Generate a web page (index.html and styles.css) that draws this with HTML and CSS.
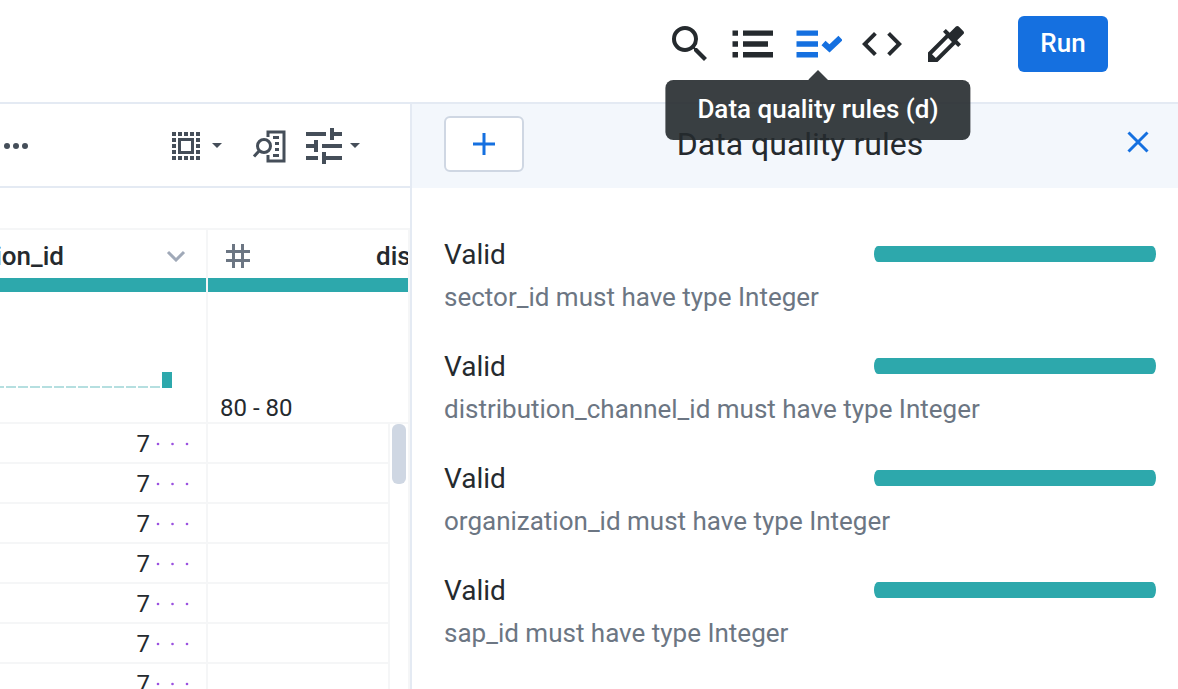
FILE: index.html
```html
<!DOCTYPE html>
<html lang="en">
<head>
<meta charset="utf-8">
<title>Data quality rules</title>
<link rel="stylesheet" href="styles.css">
</head>
<body>
<div class="app">
  <header class="topbar">
    <nav class="tools">
      <button class="icon-button" aria-label="Search"><svg viewBox="0 0 24 24"><path d="M15.5 14h-.79l-.28-.27A6.47 6.47 0 0 0 16 9.5 6.5 6.5 0 1 0 9.5 16c1.61 0 3.09-.59 4.23-1.57l.27.28v.79l5 4.99L20.49 19l-4.99-5zm-6 0C7.01 14 5 11.99 5 9.5S7.01 5 9.5 5 14 7.01 14 9.5 11.99 14 9.5 14z"/></svg></button>
      <button class="icon-button" aria-label="Recipe"><svg viewBox="0 0 48 48"><path d="M2.5 10.4H8v5.4H2.5zM2.5 21.2H8v5.6H2.5zM2.5 31.9H8v5.6H2.5zM13 10.4h30v5.4H13zM13 21.2h25v5.6H13zM13 31.9h30v5.6H13z"/></svg></button>
      <div class="tooltip-anchor">
        <button class="icon-button active" aria-label="Data quality rules"><svg viewBox="0 0 48 48"><path d="M2.5 10.4H24v5.4H2.5zM2.5 21.2H24v5.6H2.5zM2.5 31.9H24v5.6H2.5z"/><path class="check" d="M29.5 23l6 5.500 11-10.500"/></svg></button>
        <div class="tooltip" role="tooltip">Data quality rules (d)</div>
      </div>
      <button class="icon-button" aria-label="Code"><svg viewBox="0 0 24 24"><path d="M9.400 16.600L4.800 12l4.600-4.600L8 6l-6 6 6 6zM14.600 16.600l4.600-4.600-4.600-4.600L16 6l6 6-6 6z"/></svg></button>
      <button class="icon-button" aria-label="Color picker"><svg viewBox="0 0 24 24"><path d="M20.710 5.630l-2.340-2.340c-.39-.39-1.020-.39-1.410 0l-3.120 3.120-1.930-1.910-1.410 1.410 1.420 1.420L3 16.250V21h4.750l8.920-8.920 1.420 1.420 1.410-1.410-1.920-1.920 3.120-3.120c.4-.4.4-1.030.01-1.420zM6.920 19L5 17.080l8.060-8.060 1.920 1.920L6.920 19z"/></svg></button>
    </nav>
    <button class="run">Run</button>
  </header>

  <main class="workspace">
    <section class="data">
      <div class="toolbar">
        <button class="tool more" aria-label="More"><svg width="28" height="8" viewBox="0 0 28 8"><circle cx="5" cy="4" r="3"/><circle cx="14" cy="4" r="3"/><circle cx="23" cy="4" r="3"/></svg></button>
        <button class="tool select" aria-label="Select">
          <svg width="28" height="28" viewBox="0 0 28 28"><path class="dots" d="M0 2h28M0 26h28M0 8h28M0 14h28M0 20h28"/><path class="blank" d="M4 4h20v20H4z"/><path class="frame" d="M7.500 7.500h13v13h-13z"/></svg>
          <svg width="10" height="6" viewBox="0 0 10 6"><path d="M0 0h10L5 5z"/></svg>
        </button>
        <button class="tool" aria-label="Find column"><svg width="34" height="34" viewBox="0 0 34 34"><path class="line" d="M16 8V3h16v29H16v-6"/><path class="line" d="M21 8.500h6M23 14.500h4M23 20.500h4M21 26.500h6"/><circle class="line" cx="12" cy="17" r="6.500"/><path class="line" d="M7.500 21.500L2 27.500"/></svg></button>
        <button class="tool filter" aria-label="Filter">
          <svg width="36" height="36" viewBox="3 3 18 18"><path d="M3 17v2h6v-2H3zM3 5v2h10V5H3zm10 16v-2h8v-2h-8v-2h-2v6h2zM7 9v2H3v2h4v2h2V9H7zm14 4v-2H11v2h10zm-6-4h2V7h4V5h-4V3h-2v6z"/></svg>
          <svg width="10" height="6" viewBox="0 0 10 6"><path d="M0 0h10L5 5z"/></svg>
        </button>
      </div>

      <div class="grid">
        <table class="table">
          <colgroup><col><col class="col-next"><col class="col-scroll"></colgroup>
          <thead>
            <tr>
              <th>
                <div class="column-head first"><span>organization_id</span><svg class="chevron" width="20" height="12" viewBox="0 0 20 12"><path d="M2 2l8 8 8-8"/></svg></div>
                <div class="quality"></div>
                <div class="profile bars"><svg width="178" height="16" viewBox="0 0 178 16"><path class="low" d="M0 15H10M12 15H22M24 15H34M36 15H46M48 15H58M60 15H70M72 15H82M84 15H94M96 15H106M108 15H118M120 15H130M132 15H142M144 15H154M156 15H166"/><path class="high" d="M168 0h10v16h-10z"/></svg></div>
              </th>
              <th colspan="2">
                <div class="column-head"><svg class="hash" width="24" height="24" viewBox="0 0 24 24"><path d="M7.500 0v24M16.500 0v24M0 7.500h24M0 16.500h24"/></svg><span>distribution_channel_id</span></div>
                <div class="quality"></div>
                <div class="profile">80 - 80</div>
              </th>
            </tr>
          </thead>
          <tbody>
            <tr><td>7<svg class="spaces" width="34" height="4" viewBox="0 0 34 4"><circle cx="2" cy="2" r="1.300"/><circle cx="16.500" cy="2" r="1.300"/><circle cx="31" cy="2" r="1.300"/></svg></td><td></td><td></td></tr>
            <tr><td>7<svg class="spaces" width="34" height="4" viewBox="0 0 34 4"><circle cx="2" cy="2" r="1.300"/><circle cx="16.500" cy="2" r="1.300"/><circle cx="31" cy="2" r="1.300"/></svg></td><td></td><td></td></tr>
            <tr><td>7<svg class="spaces" width="34" height="4" viewBox="0 0 34 4"><circle cx="2" cy="2" r="1.300"/><circle cx="16.500" cy="2" r="1.300"/><circle cx="31" cy="2" r="1.300"/></svg></td><td></td><td></td></tr>
            <tr><td>7<svg class="spaces" width="34" height="4" viewBox="0 0 34 4"><circle cx="2" cy="2" r="1.300"/><circle cx="16.500" cy="2" r="1.300"/><circle cx="31" cy="2" r="1.300"/></svg></td><td></td><td></td></tr>
            <tr><td>7<svg class="spaces" width="34" height="4" viewBox="0 0 34 4"><circle cx="2" cy="2" r="1.300"/><circle cx="16.500" cy="2" r="1.300"/><circle cx="31" cy="2" r="1.300"/></svg></td><td></td><td></td></tr>
            <tr><td>7<svg class="spaces" width="34" height="4" viewBox="0 0 34 4"><circle cx="2" cy="2" r="1.300"/><circle cx="16.500" cy="2" r="1.300"/><circle cx="31" cy="2" r="1.300"/></svg></td><td></td><td></td></tr>
            <tr><td>7<svg class="spaces" width="34" height="4" viewBox="0 0 34 4"><circle cx="2" cy="2" r="1.300"/><circle cx="16.500" cy="2" r="1.300"/><circle cx="31" cy="2" r="1.300"/></svg></td><td></td><td></td></tr>
          </tbody>
        </table>
        <div class="scroll-thumb"></div>
      </div>
    </section>

    <aside class="panel">
      <div class="panel-head">
        <button class="add" aria-label="Add rule"><svg width="22" height="22" viewBox="0 0 22 22"><path d="M11 0v22M0 11h22"/></svg></button>
        <h1>Data quality rules</h1>
        <button class="close" aria-label="Close"><svg width="22" height="22" viewBox="0 0 22 22"><path d="M1.500 1.500l19 19M20.500 1.500l-19 19"/></svg></button>
      </div>
      <ul class="rules">
        <li class="rule"><div class="rule-top"><h2>Valid</h2><div class="rule-bar"></div></div><p>sector_id must have type Integer</p></li>
        <li class="rule"><div class="rule-top"><h2>Valid</h2><div class="rule-bar"></div></div><p>distribution_channel_id must have type Integer</p></li>
        <li class="rule"><div class="rule-top"><h2>Valid</h2><div class="rule-bar"></div></div><p>organization_id must have type Integer</p></li>
        <li class="rule"><div class="rule-top"><h2>Valid</h2><div class="rule-bar"></div></div><p>sap_id must have type Integer</p></li>
      </ul>
    </aside>
  </main>
</div>
</body>
</html>
```

FILE: styles.css
```css
:root {
  --ink: #252a2e;
  --blue: #1570e0;
  --teal: #2da8ac;
  --line: #e4eaf3;
  --cell-line: #f5f6f7;
  --muted: #6c7683;
}

* { box-sizing: border-box; }

body {
  margin: 0;
  background: #fff;
  color: var(--ink);
  font-family: Roboto, "Liberation Sans", sans-serif;
  font-size: 26px;
}

button {
  margin: 0;
  padding: 0;
  border: 0;
  background: none;
  color: inherit;
  font: inherit;
  cursor: pointer;
}

svg { display: block; flex: none; fill: currentColor; }

.app {
  display: flex;
  flex-direction: column;
  height: 100vh;
  overflow: hidden;
}

/* Top bar */
.topbar {
  display: flex;
  justify-content: flex-end;
  gap: 48px;
  padding: 16px 70px 30px 16px;
  border-bottom: 2px solid var(--line);
}

.tools { display: flex; align-items: center; gap: 16px; }
.icon-button { display: block; width: 48px; height: 48px; }
.icon-button svg { width: 48px; height: 48px; }
.active { color: var(--blue); }
.check { fill: none; stroke: currentColor; stroke-width: 6; }

.run {
  width: 90px;
  height: 56px;
  padding-bottom: 2px;
  border-radius: 6px;
  background: var(--blue);
  color: #fff;
  font-weight: 500;
}

.tooltip-anchor { position: relative; }

.tooltip {
  position: absolute;
  z-index: 1;
  top: 60px;
  left: 50%;
  transform: translateX(-50%);
  padding: 0 32px 2px;
  border-radius: 8px;
  background: rgba(37, 42, 46, 0.9);
  color: #fff;
  font-weight: 500;
  line-height: 58px;
  white-space: nowrap;
}

.tooltip::before {
  content: "";
  position: absolute;
  bottom: 100%;
  left: 50%;
  width: 20px;
  height: 10px;
  margin-left: -10px;
  background: inherit;
  clip-path: polygon(50% 0, 100% 100%, 0 100%);
}

/* Workspace */
.workspace {
  display: grid;
  flex: 1;
  grid-template-columns: minmax(0, 412fr) minmax(0, 766fr);
  min-height: 0;
}

.data {
  min-width: 0;
  overflow: hidden;
  border-right: 2px solid var(--line);
}

.toolbar {
  display: flex;
  align-items: center;
  gap: 30px;
  height: 84px;
  padding: 2px 50px 0 2px;
  border-bottom: 2px solid var(--line);
  color: #454e59;
}

.tool { display: flex; align-items: center; gap: 8px; }
.select { gap: 12px; }
.filter { margin-left: -10px; }
.more { margin-right: auto; }
.dots { fill: none; stroke: currentColor; stroke-width: 4; stroke-dasharray: 4 2; }
.blank { fill: #fff; }
.frame { fill: none; stroke: currentColor; stroke-width: 3; }
.line { fill: none; stroke: currentColor; stroke-width: 3; }

/* Data grid */
.grid { position: relative; margin-top: 40px; }

.table {
  width: 100%;
  border-top: 2px solid var(--cell-line);
  border-spacing: 0;
  table-layout: fixed;
}

.col-next { width: 182px; }
.col-scroll { width: 20px; }

th, td {
  padding: 0;
  border-right: 2px solid var(--cell-line);
  border-bottom: 2px solid var(--cell-line);
}

th { font-weight: 400; text-align: left; }

.column-head {
  display: flex;
  align-items: center;
  gap: 126px;
  height: 48px;
  padding: 4px 0 0 18px;
  overflow: hidden;
  font-weight: 500;
  line-height: 44px;
}

.first { justify-content: flex-end; gap: 102px; padding: 4px 20px 0 0; }
.chevron { fill: none; stroke: #a0a9b8; stroke-width: 3; }
.hash { fill: none; stroke: var(--muted); stroke-width: 3; }
.quality { height: 14px; background: var(--teal); }

.profile {
  display: flex;
  align-items: flex-end;
  height: 130px;
  padding-left: 12px;
  font-size: 24px;
  line-height: 28px;
}

.bars { justify-content: flex-end; padding: 0 34px 34px 0; overflow: hidden; }
.low { fill: none; stroke: #b5dfe0; stroke-width: 2; }
.high { fill: var(--teal); }

td { height: 40px; padding-top: 2px; font-size: 24px; line-height: 36px; text-align: right; }
td:first-child { padding-right: 16px; }
td:last-child { border-bottom: 0; }

.spaces {
  display: inline-block;
  margin: 0 0 4px 6px;
  color: #9b51e0;
  vertical-align: middle;
}

.scroll-thumb {
  position: absolute;
  top: 196px;
  right: 4px;
  width: 14px;
  height: 60px;
  border-radius: 6px;
  background: #cfd7e3;
}

/* Rules panel */
.panel { min-width: 0; }

.panel-head {
  display: grid;
  grid-template-columns: 1fr auto 1fr;
  align-items: center;
  height: 84px;
  padding: 0 22px 4px 32px;
  background: #f3f7fc;
}

.panel-head h1 { margin: 0; font-size: 32px; font-weight: 400; line-height: 40px; }

.add, .close {
  display: flex;
  align-items: center;
  justify-content: center;
  color: var(--blue);
}

.add {
  width: 80px;
  height: 56px;
  border: 2px solid #cfd7e3;
  border-radius: 6px;
  background: #fff;
}

.close { justify-self: end; width: 36px; height: 36px; margin-bottom: 4px; }
.add svg, .close svg { fill: none; stroke: currentColor; stroke-width: 3; }

.rules {
  display: flex;
  flex-direction: column;
  gap: 32px;
  margin: 0;
  padding: 46px 22px 0 32px;
  list-style: none;
}

.rule-top {
  display: grid;
  grid-template-columns: 430fr 282fr;
  align-items: center;
}

.rule-top h2 { margin: 0; padding-top: 2px; font-size: 28px; font-weight: 400; line-height: 38px; }
.rule-bar { height: 16px; border-radius: 4px / 8px; background: var(--teal); }
.rule p { margin: 6px 0 0; color: var(--muted); line-height: 34px; }
```
